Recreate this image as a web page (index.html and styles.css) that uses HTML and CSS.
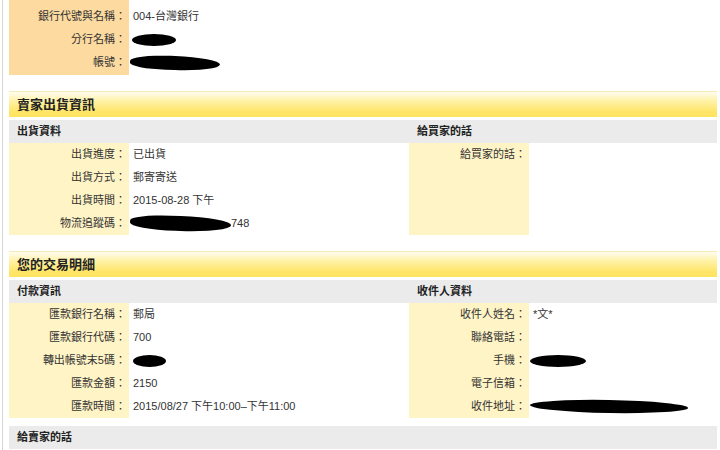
FILE: index.html
```html
<!DOCTYPE html>
<html>
<head>
<title>交易明細</title>
<meta charset="utf-8">
<link rel="stylesheet" href="styles.css">
</head>
<body>
<div class="page">
	<!-- 匯款帳戶 -->
	<div class="kv kv-bank">
		<div class="k">銀行代號與名稱：</div><div class="v">004-台灣銀行</div>
		<div class="k">分行名稱：</div><div class="v"><span class="blot blot-branch"></span></div>
		<div class="k">帳號：</div><div class="v"><span class="blot blot-account"></span></div>
	</div>

	<div class="section">
		<div class="section-title">賣家出貨資訊</div>
		<div class="cols">
			<div class="col col-left">
				<div class="subhead">出貨資料</div>
				<div class="kv">
					<div class="k">出貨進度：</div><div class="v">已出貨</div>
					<div class="k">出貨方式：</div><div class="v">郵寄寄送</div>
					<div class="k">出貨時間：</div><div class="v">2015-08-28 下午</div>
					<div class="k">物流追蹤碼：</div><div class="v"><span class="blot blot-track"></span>748</div>
				</div>
			</div>
			<div class="col col-right">
				<div class="subhead">給買家的話</div>
				<div class="kv">
					<div class="k">給買家的話：</div><div class="v"></div>
				</div>
			</div>
		</div>
	</div>

	<div class="section">
		<div class="section-title">您的交易明細</div>
		<div class="cols">
			<div class="col col-left">
				<div class="subhead">付款資訊</div>
				<div class="kv">
					<div class="k">匯款銀行名稱：</div><div class="v">郵局</div>
					<div class="k">匯款銀行代碼：</div><div class="v">700</div>
					<div class="k">轉出帳號末5碼：</div><div class="v"><span class="blot blot-last5"></span></div>
					<div class="k">匯款金額：</div><div class="v">2150</div>
					<div class="k">匯款時間：</div><div class="v">2015/08/27 下午10:00–下午11:00</div>
				</div>
			</div>
			<div class="col col-right">
				<div class="subhead">收件人資料</div>
				<div class="kv">
					<div class="k">收件人姓名：</div><div class="v">*文*</div>
					<div class="k">聯絡電話：</div><div class="v"></div>
					<div class="k">手機：</div><div class="v"><span class="blot blot-mobile"></span></div>
					<div class="k">電子信箱：</div><div class="v"></div>
					<div class="k">收件地址：</div><div class="v"><span class="blot blot-addr"></span></div>
				</div>
			</div>
		</div>
		<div class="subhead subhead-gap">給賣家的話</div>
	</div>
</div>
</body>
</html>
```

FILE: styles.css
```css
body {
	margin: 0;
	background: #fff;
	font-family: "Liberation Sans", "Noto Sans CJK TC", sans-serif;
	font-size: 11px;
	color: #333;
}
.page {
	margin-left: 2px;
	border-left: 1px solid #d4d4d4;
	padding-left: 6px;
	width: 708px;
	height: 450px;
	overflow: hidden;
}
.kv {
	display: grid;
	grid-template-columns: 120px 1fr;
	grid-auto-rows: 23px;
	align-content: start;
	background: linear-gradient(to right, #fff4c6 120px, transparent 120px);
}
.kv-bank {
	padding: 5px 0 1px 0;
	background: linear-gradient(to right, #fcdaa0 120px, transparent 120px);
}
.k {
	text-align: right;
	padding-right: 3px;
	line-height: 23px;
	white-space: nowrap;
}
.v {
	padding-left: 4px;
	line-height: 23px;
	white-space: nowrap;
	display: flex;
	align-items: center;
}
.section {
	margin-top: 16px;
}
.section-title {
	height: 25px;
	line-height: 25px;
	border-top: 1px solid #f6e9b4;
	background: linear-gradient(#fffdf0, #fff2a8 35%, #ffe566 80%, #ffe460);
	padding-left: 8px;
	font-size: 13px;
	font-weight: bold;
	color: #222;
	margin-bottom: 3px;
}
.cols {
	display: flex;
}
.col {
	display: flex;
	flex-direction: column;
}
.col .kv {
	flex: 1;
}
.col-left {
	width: 400px;
}
.col-right {
	flex: 1;
}
.subhead {
	height: 23px;
	line-height: 23px;
	background: #ebebeb;
	padding-left: 8px;
	font-weight: bold;
	color: #222;
}
.subhead-gap {
	margin-top: 8px;
}
.blot {
	display: inline-block;
	background: #000;
	border-radius: 50%;
}
.blot-branch { width: 44px; height: 12px; margin-left: -1px; }
.blot-account { width: 90px; height: 14px; margin-left: -3px; border-radius: 45% 50% 50% 40%; transform: rotate(2deg); }
.blot-track { width: 101px; height: 15px; margin-left: -3px; border-radius: 40% 50% 50% 45%; transform: rotate(2deg); }
.blot-last5 { width: 33px; height: 12px; }
.blot-mobile { width: 56px; height: 12px; margin-left: -3px; }
.blot-addr { width: 158px; height: 13px; margin-left: -3px; transform: rotate(1deg); }
```
